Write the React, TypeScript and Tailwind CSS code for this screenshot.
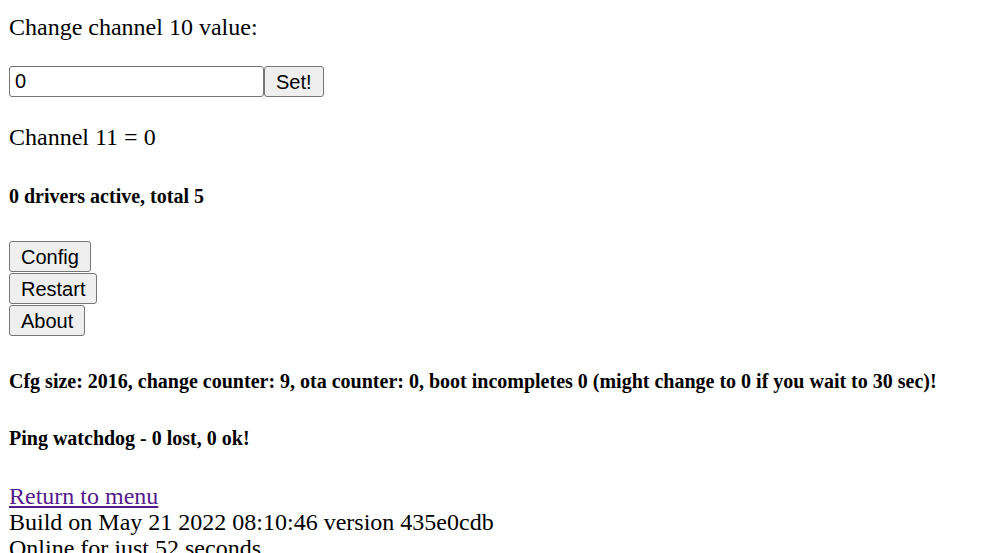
export default function App() {
  const btn =
    "block h-[31px] rounded-[3px] border border-[#767676] bg-[#efefef] px-[11px] text-[20px] leading-none text-black [font-family:'Liberation_Sans',Arial,sans-serif]";

  return (
    <div className="min-h-screen bg-white pl-[9px] text-black [font-family:'Liberation_Serif','Times_New_Roman',serif] text-[24px] leading-[26px]">
      <p className="pt-[14px]">Change channel 10 value:</p>

      <form className="mt-[26px] flex" onSubmit={(e) => e.preventDefault()}>
        <input
          defaultValue="0"
          className="h-[31px] w-[255px] rounded-[3px] border border-[#767676] bg-white px-[5px] text-[20px] text-black [font-family:'Liberation_Sans',Arial,sans-serif]"
        />
        <button type="submit" className={btn}>
          Set!
        </button>
      </form>

      <p className="mt-[27px]">Channel 11 = 0</p>

      <h5 className="mt-[35px] text-[20px] font-bold leading-[23px]">0 drivers active, total 5</h5>

      <div className="mt-[33px] flex flex-col items-start gap-px">
        <button className={btn}>Config</button>
        <button className={btn}>Restart</button>
        <button className={btn}>About</button>
      </div>

      <h5 className="mt-[34px] text-[20px] font-bold leading-[23px]">
        Cfg size: 2016, change counter: 9, ota counter: 0, boot incompletes 0 (might change to 0 if you wait to 30 sec)!
      </h5>

      <h5 className="mt-[34px] text-[20px] font-bold leading-[23px]">Ping watchdog - 0 lost, 0 ok!</h5>

      <a href="#" className="mt-[33px] block w-fit text-[#551a8b] underline">
        Return to menu
      </a>
      <div>Build on May 21 2022 08:10:46 version 435e0cdb</div>
      <div>Online for just 52 seconds</div>
    </div>
  );
}
